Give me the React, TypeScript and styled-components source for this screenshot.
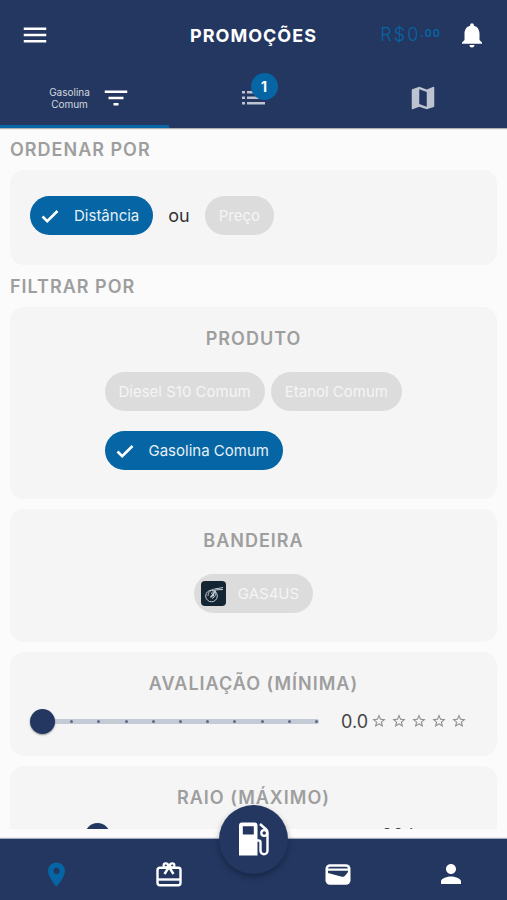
import { useState } from 'react';
import styled, { createGlobalStyle, css } from 'styled-components';
import {
  MdFilterList,
  MdLocationOn,
  MdMap,
  MdMenu,
  MdNotifications,
  MdPerson,
  MdStarBorder,
} from 'react-icons/md';

const PRODUCTS = ['Diesel S10 Comum', 'Etanol Comum', 'Gasolina Comum'];
const STARS = [1, 2, 3, 4, 5];
const RATING_STEPS = 10;

export default function App() {
  const [order, setOrder] = useState('Distância');
  const [product, setProduct] = useState('Gasolina Comum');
  const [rating, setRating] = useState(0);
  const [radius, setRadius] = useState(20);

  return (
    <Screen>
      <GlobalStyle />
      <Header>
        <TopBar>
          <IconButton aria-label="Menu">
            <MdMenu size={30} />
          </IconButton>
          <Title>PROMOÇÕES</Title>
          <TopActions>
            <Balance>
              R$0<Cents>.00</Cents>
            </Balance>
            <IconButton aria-label="Notificações">
              <MdNotifications size={30} />
            </IconButton>
          </TopActions>
        </TopBar>
        <Tabs>
          <Tab $active>
            <TabLabel>Gasolina Comum</TabLabel>
            <MdFilterList size={30} />
          </Tab>
          <Tab aria-label="Lista">
            <ListHolder>
              <ListIcon />
              <Badge>1</Badge>
            </ListHolder>
          </Tab>
          <Tab aria-label="Mapa">
            <MdMap size={30} />
          </Tab>
        </Tabs>
      </Header>

      <Content>
        <SectionTitle>ORDENAR POR</SectionTitle>
        <Card>
          <OrderRow>
            <Chip $selected={order === 'Distância'} onClick={() => setOrder('Distância')}>
              {order === 'Distância' && <CheckMark />}
              Distância
            </Chip>
            <Or>ou</Or>
            <Chip $selected={order === 'Preço'} onClick={() => setOrder('Preço')}>
              {order === 'Preço' && <CheckMark />}
              Preço
            </Chip>
          </OrderRow>
        </Card>

        <SectionTitle>FILTRAR POR</SectionTitle>
        <Card>
          <CardTitle>PRODUTO</CardTitle>
          <ProductChips>
            {PRODUCTS.map((name) => (
              <Chip key={name} $selected={product === name} onClick={() => setProduct(name)}>
                {product === name && <CheckMark />}
                {name}
              </Chip>
            ))}
          </ProductChips>
        </Card>

        <Card>
          <CardTitle>BANDEIRA</CardTitle>
          <BrandChips>
            <Chip $withLogo>
              <BrandLogo />
              GAS4US
            </Chip>
          </BrandChips>
        </Card>

        <Card>
          <CardTitle id="rating-title">AVALIAÇÃO (MÍNIMA)</CardTitle>
          <SliderRow>
            <SliderTrack>
              <Ticks>
                {Array.from({ length: RATING_STEPS + 1 }, (_, i) => (
                  <Tick key={i} />
                ))}
              </Ticks>
              <Slider
                type="range"
                aria-labelledby="rating-title"
                min={0}
                max={5}
                step={0.5}
                value={rating}
                onChange={(e) => setRating(Number(e.target.value))}
              />
            </SliderTrack>
            <RatingValue>{rating.toFixed(1)}</RatingValue>
            <StarList>
              {STARS.map((star) => (
                <MdStarBorder key={star} size={16} />
              ))}
            </StarList>
          </SliderRow>
        </Card>

        <Card>
          <CardTitle id="radius-title">RAIO (MÁXIMO)</CardTitle>
          <SliderRow>
            <SliderTrack>
              <Ticks />
              <Slider
                type="range"
                aria-labelledby="radius-title"
                min={1}
                max={100}
                value={radius}
                onChange={(e) => setRadius(Number(e.target.value))}
              />
            </SliderTrack>
            <RadiusValue>{radius} km</RadiusValue>
          </SliderRow>
        </Card>
      </Content>

      <BottomBar>
        <NavButton $active aria-label="Promoções">
          <MdLocationOn size={29} />
        </NavButton>
        <NavButton aria-label="Prêmios">
          <GiftIcon />
        </NavButton>
        <FuelButton aria-label="Abastecer">
          <FuelIcon />
        </FuelButton>
        <NavButton aria-label="Carteira">
          <WalletIcon />
        </NavButton>
        <NavButton aria-label="Perfil">
          <MdPerson size={30} />
        </NavButton>
      </BottomBar>
    </Screen>
  );
}

const CheckMark = () => (
  <svg width="20" height="20" viewBox="0 0 20 20" fill="none" stroke="#fff" strokeWidth="2.600">
    <path d="M2.500 10.500l4.700 4.700L17.500 5" />
  </svg>
);

const ListIcon = () => (
  <svg width="24" height="14" viewBox="0 0 24 14" fill="currentColor">
    <path d="M0 0h3v2.500H0zM5 0h18v2.500H5zM0 5.500h3V8H0zM5 5.500h18V8H5zM0 11h3v2.500H0zM5 11h18v2.500H5z" />
  </svg>
);

const BrandLogo = () => (
  <svg width="25" height="25" viewBox="0 0 25 25" fill="none" stroke="#c3ccd3">
    <rect width="25" height="25" rx="4" fill="#142534" stroke="none" />
    <circle cx="10.500" cy="15" r="5.800" />
    <path d="M7 15c0-4 3-6.500 7-7l8-1.500M22 8.500l-6 .3c-3 .2-5 2-5.500 4M14 10c2 3 0 6-3 7.500" />
    <path d="M14.500 10l-5 6.500M13 11.500l-1 4" strokeWidth="1.500" />
  </svg>
);

const GiftIcon = () => (
  <svg width="26" height="25" viewBox="0 0 26 25" fill="none" stroke="currentColor" strokeWidth="2.400">
    <rect x="1.500" y="5.800" width="23" height="17.500" rx="2.200" />
    <path d="M2 17.500h22" />
    <circle cx="9.800" cy="3.500" r="2.200" strokeWidth="2.200" />
    <circle cx="16.200" cy="3.500" r="2.200" strokeWidth="2.200" />
    <path d="M13 5l-4.500 7M13 5l4.500 7" />
  </svg>
);

const WalletIcon = () => (
  <svg width="26" height="21" viewBox="0 0 26 21">
    <rect x="0.500" y="0.300" width="25" height="20.400" rx="4.500" fill="currentColor" />
    <path d="M3 4.400q.3-1.600 2-1.600h16q1.700 0 2 1.600z" fill="#233761" />
    <path d="M3 6.800h20v1.200l-1.500 2-2 2.300q-1.500.9-3.500.3L3 9z" fill="#233761" />
  </svg>
);

const FuelIcon = () => (
  <svg width="30" height="34" viewBox="0 0 30 34" fill="none" stroke="currentColor">
    <path
      d="M3 .5h12.500a3 3 0 0 1 3 3v30H0v-30a3 3 0 0 1 3-3zM3.800 4.200v8.300h11V4.200z"
      fill="currentColor"
      fillRule="evenodd"
      stroke="none"
    />
    <path
      d="M18 18.500h1.500q2 0 2 2v8.300a3.500 3.500 0 0 0 7 0V10.500q0-1.800-1.300-3L21 2"
      strokeWidth="2.400"
    />
    <circle cx="25.200" cy="11" r="2.900" strokeWidth="2.300" />
  </svg>
);

const GlobalStyle = createGlobalStyle`
  * {
    box-sizing: border-box;
  }
  body {
    margin: 0;
    background: #fbfbfb;
    font-family: Inter, 'Liberation Sans', sans-serif;
  }
  button {
    font-family: inherit;
    border: none;
    background: none;
    padding: 0;
    cursor: pointer;
  }
  svg {
    display: block;
    flex-shrink: 0;
  }
`;

const Screen = styled.div`
  display: flex;
  flex-direction: column;
  height: 100vh;
`;

const Header = styled.header`
  background: #233761;
  color: #fff;
  box-shadow: 0 1px 1px rgba(0, 0, 0, 0.3);
`;

const TopBar = styled.div`
  display: grid;
  grid-template-columns: 1fr auto 1fr;
  align-items: center;
  height: 70px;
  padding: 0 20px;
`;

const IconButton = styled.button`
  display: flex;
  color: inherit;
`;

const Title = styled.h1`
  margin: 0;
  font-size: 18px;
  font-weight: 700;
  letter-spacing: 1px;
`;

const TopActions = styled.div`
  display: flex;
  align-items: center;
  justify-content: flex-end;
  gap: 16px;
`;

const Balance = styled.span`
  display: flex;
  align-items: flex-start;
  font-size: 18px;
  font-weight: 300;
  line-height: 22px;
  letter-spacing: 2px;
  color: #0665a4;
`;

const Cents = styled.span`
  font-size: 11px;
  font-weight: 600;
  line-height: 18px;
  letter-spacing: 1px;
`;

const Tabs = styled.nav`
  display: grid;
  grid-template-columns: repeat(3, 1fr);
  height: 58px;
`;

const Tab = styled.button<{ $active?: boolean }>`
  display: flex;
  align-items: center;
  justify-content: center;
  gap: 8px;
  padding-left: ${({ $active }) => ($active ? '8px' : '0')};
  color: ${({ $active }) => ($active ? '#fff' : '#bdc3d0')};
  border-bottom: 3px solid ${({ $active }) => ($active ? '#0665a4' : 'transparent')};
`;

const TabLabel = styled.span`
  width: 46px;
  font-size: 10px;
  line-height: 12px;
  color: #d3d7df;
`;

const ListHolder = styled.span`
  position: relative;
`;

const Badge = styled.span`
  position: absolute;
  top: -18px;
  right: -12px;
  width: 27px;
  height: 27px;
  border-radius: 50%;
  background: #0665a4;
  color: #fff;
  font-size: 14px;
  font-weight: 700;
  line-height: 27px;
`;

const Content = styled.main`
  flex: 1;
  min-height: 0;
  margin-bottom: 10px;
  padding: 10px 10px 0;
  overflow-y: auto;
  scrollbar-width: none;
`;

const headingText = css`
  font-size: 18px;
  font-weight: 600;
  line-height: 24px;
  letter-spacing: 1px;
  color: #9e9e9e;
`;

const SectionTitle = styled.h2`
  ${headingText}
  margin: 0 0 8px;
`;

const Card = styled.section`
  margin-bottom: 10px;
  padding: 20px;
  border-radius: 14px;
  background: #f5f5f5;
`;

const CardTitle = styled.h3`
  ${headingText}
  margin: 0;
  text-align: center;
`;

const OrderRow = styled.div`
  display: flex;
  align-items: center;
  gap: 15px;
  padding: 6px 0 10px;
`;

const Or = styled.span`
  font-size: 18px;
  color: #333;
`;

const Chip = styled.button<{ $selected?: boolean; $withLogo?: boolean }>`
  display: flex;
  align-items: center;
  height: 39px;
  padding: ${({ $selected, $withLogo }) => ($selected ? '0 14px 0 10px' : $withLogo ? '0 14px 0 7px' : '0 14px')};
  gap: ${({ $withLogo }) => ($withLogo ? '12px' : '14px')};
  border-radius: 20px;
  background: ${({ $selected }) => ($selected ? '#0665a4' : '#dcdcdc')};
  color: ${({ $selected }) => ($selected ? '#e6f0f6' : '#f5f5f5')};
  font-size: 15px;
`;

const ProductChips = styled.div`
  display: flex;
  flex-wrap: wrap;
  gap: 20px 6px;
  max-width: 298px;
  margin: 21px auto 9px;
`;

const BrandChips = styled.div`
  display: flex;
  justify-content: center;
  padding: 21px 0 9px;
`;

const SliderRow = styled.div`
  display: flex;
  align-items: center;
  height: 26px;
  margin: 12px 0 2px;
`;

const SliderTrack = styled.div`
  position: relative;
  flex: 1;
  height: 25px;
`;

const Ticks = styled.div`
  position: absolute;
  inset: 10px 0 10px 12px;
  display: flex;
  align-items: center;
  justify-content: space-between;
  padding: 0 1px;
  border-radius: 2px;
  background: #c5cad7;
`;

const Tick = styled.span`
  width: 3px;
  height: 3px;
  border-radius: 50%;
  background: #5d6a88;
`;

const Slider = styled.input`
  position: relative;
  display: block;
  width: 100%;
  height: 25px;
  margin: 0;
  appearance: none;
  background: transparent;

  &::-webkit-slider-thumb {
    appearance: none;
    width: 25px;
    height: 25px;
    border-radius: 50%;
    background: #233761;
    box-shadow: 0 1px 2px rgba(0, 0, 0, 0.4);
  }
`;

const RatingValue = styled.output`
  margin-left: 22px;
  font-size: 18px;
  color: #444;
`;

const StarList = styled.span`
  display: flex;
  gap: 4px;
  padding: 0 10px 0 3px;
  color: #8c8c8c;
`;

const RadiusValue = styled.output`
  width: 138px;
  text-align: center;
  font-size: 18px;
  color: #444;
`;

const BottomBar = styled.nav`
  display: grid;
  grid-template-columns: 1fr 1fr 56px 1fr 1fr;
  align-items: center;
  height: 61px;
  background: #233761;
  box-shadow: 0 -1px 1px rgba(35, 55, 97, 0.4);
`;

const NavButton = styled.button<{ $active?: boolean }>`
  display: flex;
  justify-content: center;
  padding-top: 9px;
  color: ${({ $active }) => ($active ? '#0665a4' : '#fff')};
`;

const FuelButton = styled.button`
  display: flex;
  align-items: center;
  justify-content: center;
  width: 69px;
  height: 69px;
  margin-top: -61px;
  justify-self: center;
  border-radius: 50%;
  background: #233761;
  color: #fff;
  box-shadow: 0 3px 6px rgba(0, 0, 0, 0.3);
`;
